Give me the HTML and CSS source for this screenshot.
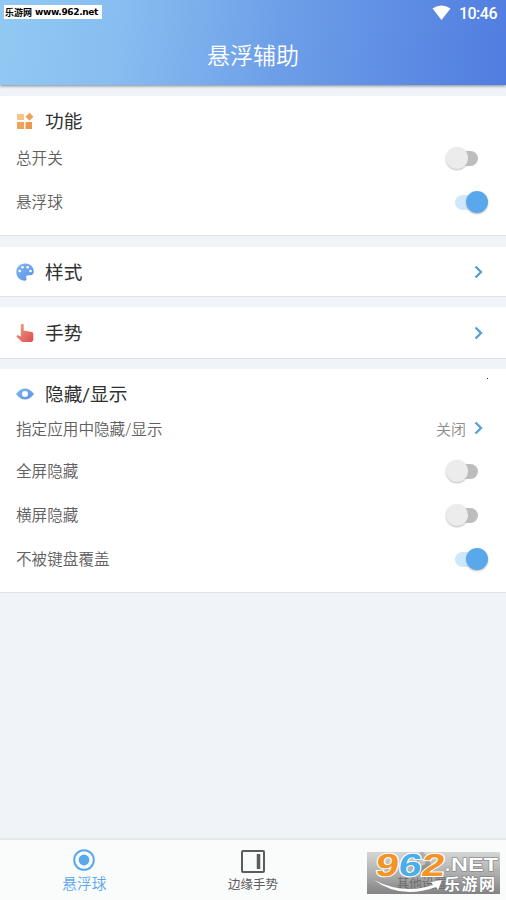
FILE: index.html
```html
<!DOCTYPE html>
<html lang="zh-CN">
<head>
<meta charset="utf-8">
<title>悬浮辅助</title>
<link rel="stylesheet" href="styles.css">
</head>
<body>
<div class="app">
  <header class="header">
    <div class="status">
      <span class="site">乐游网 <span class="url">www.962.net</span></span>
      <span class="clock"><svg width="19" height="16" viewBox="0 0 19 16"><path d="M.5 3.500Q9.500-2.500 18.500 3.500L9.500 15Z" fill="#fff"/></svg>10:46</span>
    </div>
    <h1>悬浮辅助</h1>
  </header>
  <main>
    <section class="card functions">
      <h2><svg class="icon" viewBox="0 0 18 18"><path fill="#f6c585" d="M1 2h7v6H1z"/><path fill="#eea35b" d="m13.500.7 4 4-4 4-4-4z"/><path fill="#efa25d" d="M1 10h7v7H1z"/><path fill="#ee974f" d="M9.500 10h6.500v7H9.500z"/></svg><span>功能</span></h2>
      <div class="row r1"><span>总开关</span><i class="switch"></i></div>
      <div class="row r2"><span>悬浮球</span><i class="switch on"></i></div>
    </section>
    <section class="card style">
      <h2><svg class="icon" viewBox="0 0 18 18"><defs><linearGradient id="blue" x2="1" y2="1"><stop stop-color="#80b9f5"/><stop offset="1" stop-color="#5b8de3"/></linearGradient></defs><path fill="url(#blue)" d="M9 .5C4 .5.300 4 .300 9s3.700 8.700 8.500 8.700c1.800 0 2.200-1.300 1.500-2.700-.7-1.700.3-2.700 2.200-2.700h1.800c2.200 0 3.500-1.500 3.500-3.800C17.800 4 14 .500 9 .500Z"/><g fill="#fff"><circle cx="3.700" cy="8" r="1.300"/><circle cx="6.500" cy="4.200" r="1.300"/><circle cx="11.700" cy="4.200" r="1.300"/><circle cx="14.500" cy="8" r="1.300"/></g></svg><span>样式</span></h2>
      <svg class="chevron" viewBox="0 0 9 14"><path d="m1.500 1.500 5.500 5.500-5.500 5.500"/></svg>
    </section>
    <section class="card gesture">
      <h2><svg class="icon" viewBox="0 0 18 18"><defs><linearGradient id="red" x2="1" y2="1"><stop stop-color="#f3a083"/><stop offset="1" stop-color="#d94e51"/></linearGradient></defs><path fill="url(#red)" d="M4.800 1.200C4.800-.8 7.700-.800 7.700 1.200v5.300l8 1.500c1 .2 1.600.8 1.600 1.800v5.400c0 1.800-1 2.800-2.300 2.800H7.300c-1.300 0-1.800-.5-2.500-1.300L.8 13c-.7-1 .2-2 1.400-1.700l2.600 1.300Z"/></svg><span>手势</span></h2>
      <svg class="chevron" viewBox="0 0 9 14"><path d="m1.500 1.500 5.500 5.500-5.500 5.500"/></svg>
    </section>
    <section class="card visibility">
      <h2><svg class="icon" viewBox="0 0 18 18"><path fill="url(#blue)" fill-rule="evenodd" d="M0 9C3 5 6 3.500 9 3.500S15 5 18 9c-3 4-6 5.500-9 5.500S3 13 0 9Zm9-3a3 3 0 1 0 0 6 3 3 0 0 0 0-6Z"/></svg><span>隐藏/显示</span></h2>
      <div class="row v1"><span>指定应用中隐藏/显示</span><span class="value">关闭<svg class="chevron" viewBox="0 0 9 14"><path d="m1.500 1.500 5.500 5.500-5.500 5.500"/></svg></span></div>
      <div class="row v2"><span>全屏隐藏</span><i class="switch"></i></div>
      <div class="row v3"><span>横屏隐藏</span><i class="switch"></i></div>
      <div class="row v4"><span>不被键盘覆盖</span><i class="switch on"></i></div>
      <i class="speck"></i>
    </section>
  </main>
  <nav>
    <div class="tab active"><svg width="22" height="22" viewBox="0 0 22 22"><circle cx="11" cy="11" r="9.800" fill="none" stroke="#5aa8ec" stroke-width="2"/><circle cx="11" cy="11" r="5.400" fill="#5aa8ec"/></svg><span>悬浮球</span></div>
    <div class="tab edge"><svg width="24" height="23" viewBox="0 0 24 23"><rect x="1" y="1" width="22" height="21" rx="1" fill="none" stroke="#5c5c5c" stroke-width="2"/><path d="M17.500 4v15" stroke="#5c5c5c" stroke-width="3.500"/></svg><span>边缘手势</span></div>
    <div class="tab other"><svg width="22" height="22" viewBox="0 0 22 22"><circle cx="11" cy="11" r="6" fill="none" stroke="#777" stroke-width="5"/><path d="M11 1v4M11 18v4M1 5l4 3M17 14l4 3M1 17l4-3M17 8l4-3" stroke="#777" stroke-width="4"/></svg><span>其他设置</span></div>
  </nav>
  <div class="watermark">
    <svg width="133" height="42" viewBox="0 0 133 42">
      <g class="digits" transform="translate(4 0) skewX(-8)"><text x="7" y="24" textLength="23" lengthAdjust="spacingAndGlyphs" fill="#f39429">9</text><text x="30" y="24" textLength="23" lengthAdjust="spacingAndGlyphs" fill="#4aaee9">6</text><text x="53" y="24" textLength="23" lengthAdjust="spacingAndGlyphs" fill="#f39429">2</text></g>
      <path d="M7 28Q36 43 66 33L64 30 75 28 71 38 69 35Q34 48 7 28Z" fill="#fff"/>
      <g class="net"><text x="78" y="19">.</text><text x="84" y="19" textLength="47" lengthAdjust="spacingAndGlyphs">NET</text></g>
      <text class="name" x="77" y="38" textLength="51">乐游网</text>
    </svg>
  </div>
</div>
</body>
</html>
```
FILE: styles.css
```css
* { box-sizing: border-box; }
body { margin: 0; font-family: Roboto, "Noto Sans CJK SC", sans-serif; background: #f0f4f8; }
.app { position: relative; width: 506px; height: 900px; display: flex; flex-direction: column; overflow: hidden; }
.header { height: 85px; flex: none; background: linear-gradient(97deg, #91c9f3 0%, #87bdf0 24%, #6d9fe8 55%, #507de0 100%); box-shadow: 0 1px 3px #7b858f; color: #fff; }
.status { height: 28px; display: flex; justify-content: space-between; align-items: flex-start; padding: 5px 9px 0 4px; }
.site { width: 98px; height: 14px; background: #fff; color: #000; font: bold 9px/15px "Noto Sans CJK SC", sans-serif; padding-left: 1px; white-space: nowrap; display: flex; gap: 3px; }
.url { font-family: "DejaVu Sans", sans-serif; font-size: 9px; line-height: 15px; letter-spacing: -.35px; }
.clock { display: flex; align-items: flex-start; gap: 8px; font-size: 16px; font-weight: 500; line-height: 18px; letter-spacing: -.5px; }
h1 { margin: 12px 0 0; text-align: center; font-size: 23px; line-height: 34px; font-weight: 350; }
main { flex: 1; display: flex; flex-direction: column; padding-top: 11px; gap: 11px; }
.card { position: relative; background: #fff; border-bottom: 1px solid #dde2e5; padding: 0 16px; flex: none; }
.functions { height: 140px; padding-top: 10px; }
.style, .gesture { display: flex; align-items: center; justify-content: space-between; padding-right: 23px; }
.style { height: 50px; }
.gesture { height: 52px; margin-top: -1px; }
.visibility { height: 224px; padding-top: 10px; margin-top: -1px; }
h2 { display: flex; align-items: center; gap: 11px; height: 30px; margin: 0; font-size: 18.700px; font-weight: 400; color: #303030; }
h2 span { padding-bottom: 3px; }
.icon { width: 18px; height: 18px; flex: none; }
.row { display: flex; align-items: center; justify-content: space-between; font-size: 15.600px; color: #606060; font-weight: 350; }
.row > span { padding-bottom: 2px; }
.r1, .v2, .v3, .v4 { height: 44px; }
.v1 { height: 40px; }
.r2 { height: 43px; }
.value { display: flex; align-items: center; gap: 8px; font-size: 15px; color: #8c8c8c; margin-right: 7px; }
.chevron { width: 9px; height: 14px; flex: none; fill: none; stroke: #579fda; stroke-width: 2.300; }
.switch { position: relative; width: 33px; height: 22px; margin-right: 11px; }
.switch::before { content: ""; position: absolute; left: 10px; top: 4px; width: 22px; height: 15px; border-radius: 8px; background: #bdbdbd; }
.switch::after { content: ""; position: absolute; left: 0; top: 0; width: 22px; height: 22px; border-radius: 50%; background: #ececec; box-shadow: 0 1px 2px #bbb; }
.switch.on { margin-right: 2px; }
.switch.on::before { left: 0; background: #cee7fb; }
.switch.on::after { left: 11px; background: #58a8eb; }
.speck { position: absolute; left: 487px; top: 9px; width: 1px; height: 1px; background: #222; }
nav { height: 61px; flex: none; background: #fafbfb; border-top: 1px solid #e5e8eb; box-shadow: 0 -1px 1px #e8ebee; display: grid; grid-template-columns: repeat(3, 1fr); }
.tab { display: flex; flex-direction: column; align-items: center; padding-top: 9px; color: #5c5c5c; font-size: 12.500px; line-height: 20px; }
.tab span { margin-top: 2px; }
.active { color: #5aa8ec; font-size: 14.700px; line-height: 22px; font-weight: 350; }
.edge { padding-top: 10px; }
.other { padding-top: 11px; }
.other span { margin-top: 1px; }
.watermark { position: absolute; left: 367px; top: 852px; width: 133px; height: 42px; background: linear-gradient(#c8c8c8bb, #777777aa 65%, #656565cc); }
.watermark svg { display: block; overflow: visible; }
.digits { font: bold 32px "Liberation Sans", sans-serif; stroke: #fff; stroke-width: 2px; paint-order: stroke; }
.net { font: bold 18px "Liberation Sans", sans-serif; fill: #fff; stroke: #777; stroke-width: 1px; paint-order: stroke; }
.name { font: bold 16px "Noto Sans CJK SC", sans-serif; fill: #fff; stroke: #777; stroke-width: 1px; paint-order: stroke; }
```
